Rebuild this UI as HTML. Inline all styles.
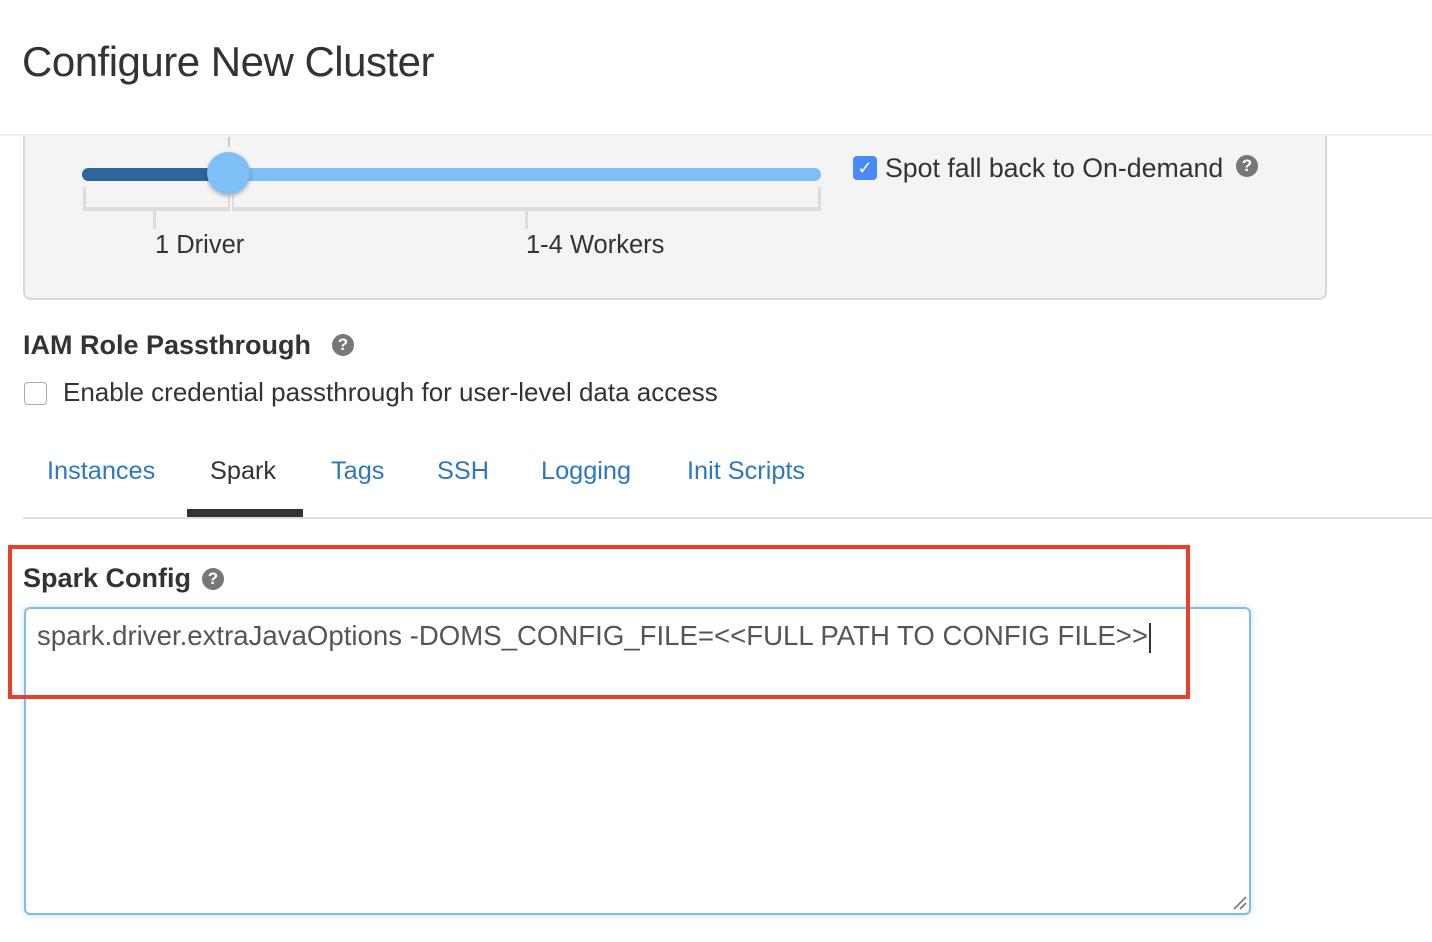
<!DOCTYPE html>
<html><head><meta charset="utf-8"><style>
*{margin:0;padding:0;box-sizing:border-box}
body{width:1432px;height:942px;background:#fff;font-family:"Liberation Sans",Helvetica,Arial,sans-serif;color:#333;position:relative;overflow:hidden}
.a{position:absolute;white-space:nowrap}
.q{position:absolute;width:22px;height:22px;border-radius:50%;background:#777;color:#fff;font-weight:bold;font-size:17px;text-align:center;line-height:22px}
</style></head><body>
<div class="a" style="left:22px;top:38px;font-size:42px;color:#333;letter-spacing:-0.5px;font-weight:300">Configure New Cluster</div>
<div class="a" style="left:0;top:134px;width:1432px;height:2px;background:#eee"></div>
<div class="a" style="left:23px;top:136px;width:1304px;height:164px;background:#f4f4f4;border:2px solid #d8d8d8;border-top:none;border-radius:0 0 8px 8px"></div>
<div class="a" style="left:228px;top:137px;width:2px;height:10px;background:#ccc"></div>
<div class="a" style="left:82px;top:168px;width:739px;height:13px;border-radius:7px;background:#7cc0f7"></div>
<div class="a" style="left:82px;top:168px;width:150px;height:13px;border-radius:7px 0 0 7px;background:#2f6699"></div>
<div class="a" style="left:83px;top:187px;width:3px;height:24px;background:#ddd"></div>
<div class="a" style="left:818px;top:187px;width:3px;height:24px;background:#ddd"></div>
<div class="a" style="left:83px;top:207px;width:738px;height:4px;background:#ddd"></div>
<div class="a" style="left:228px;top:195px;width:5px;height:16px;background:#f4f4f4"></div>
<div class="a" style="left:228px;top:195px;width:2px;height:16px;background:#ddd"></div>
<div class="a" style="left:232px;top:195px;width:2px;height:16px;background:#ddd"></div>
<div class="a" style="left:153px;top:210px;width:3px;height:19px;background:#ddd"></div>
<div class="a" style="left:525px;top:210px;width:3px;height:19px;background:#ddd"></div>
<div class="a" style="left:207px;top:152px;width:43px;height:42px;border-radius:50%;background:#7cc0f7;box-shadow:0 2px 4px rgba(0,0,0,.3)"></div>
<div class="a" style="left:155px;top:231px;font-size:25.5px">1 Driver</div>
<div class="a" style="left:526px;top:231px;font-size:25.5px">1-4 Workers</div>
<div class="a" style="left:853px;top:156px;width:24px;height:24px;border-radius:4px;background:#4a8af4;color:#fff;font-size:18px;text-align:center;line-height:24px">✓</div>
<div class="a" style="left:885px;top:153px;font-size:26.7px">Spot fall back to On-demand</div>
<div class="q" style="left:1236px;top:155px">?</div>
<div class="a" style="left:23px;top:330px;font-size:27px;font-weight:bold">IAM Role Passthrough</div>
<div class="q" style="left:332px;top:334px">?</div>
<div class="a" style="left:24px;top:382px;width:23px;height:23px;border:1px solid #aaa;border-radius:4px;background:#fff"></div>
<div class="a" style="left:63px;top:377px;font-size:26px">Enable credential passthrough for user-level data access</div>
<div class="a" style="left:47px;top:457px;font-size:25.3px;color:#2d77c2">Instances</div>
<div class="a" style="left:210px;top:457px;font-size:25.3px;color:#333">Spark</div>
<div class="a" style="left:331px;top:457px;font-size:25.3px;color:#2d77c2">Tags</div>
<div class="a" style="left:437px;top:457px;font-size:25.3px;color:#2d77c2">SSH</div>
<div class="a" style="left:541px;top:457px;font-size:25.3px;color:#2d77c2">Logging</div>
<div class="a" style="left:687px;top:457px;font-size:25.3px;color:#2d77c2">Init Scripts</div>
<div class="a" style="left:23px;top:517px;width:1409px;height:2px;background:#ddd"></div>
<div class="a" style="left:187px;top:509px;width:116px;height:8px;background:#333"></div>
<div class="a" style="left:23px;top:563px;font-size:27px;font-weight:bold">Spark Config</div>
<div class="q" style="left:202px;top:568px">?</div>
<div class="a" style="left:24px;top:607px;width:1227px;height:308px;border:2px solid #86b9ee;border-radius:6px;background:#fff;box-shadow:0 0 8px rgba(120,180,240,.4)"></div>
<div class="a" style="left:37px;top:620px;font-size:27.6px;color:#555">spark.driver.extraJavaOptions -DOMS_CONFIG_FILE=&lt;&lt;FULL PATH TO CONFIG FILE&gt;&gt;<span style="display:inline-block;width:2px;height:30px;background:#333;vertical-align:middle;margin-left:1px"></span></div>
<svg class="a" style="left:1232px;top:895px" width="16" height="16"><path d="M2 14L14 2M8 14L14 8" stroke="#666" stroke-width="1.5"/></svg>
<div class="a" style="left:8px;top:545px;width:1182px;height:154px;border:4px solid #e8402a"></div>
</body></html>
